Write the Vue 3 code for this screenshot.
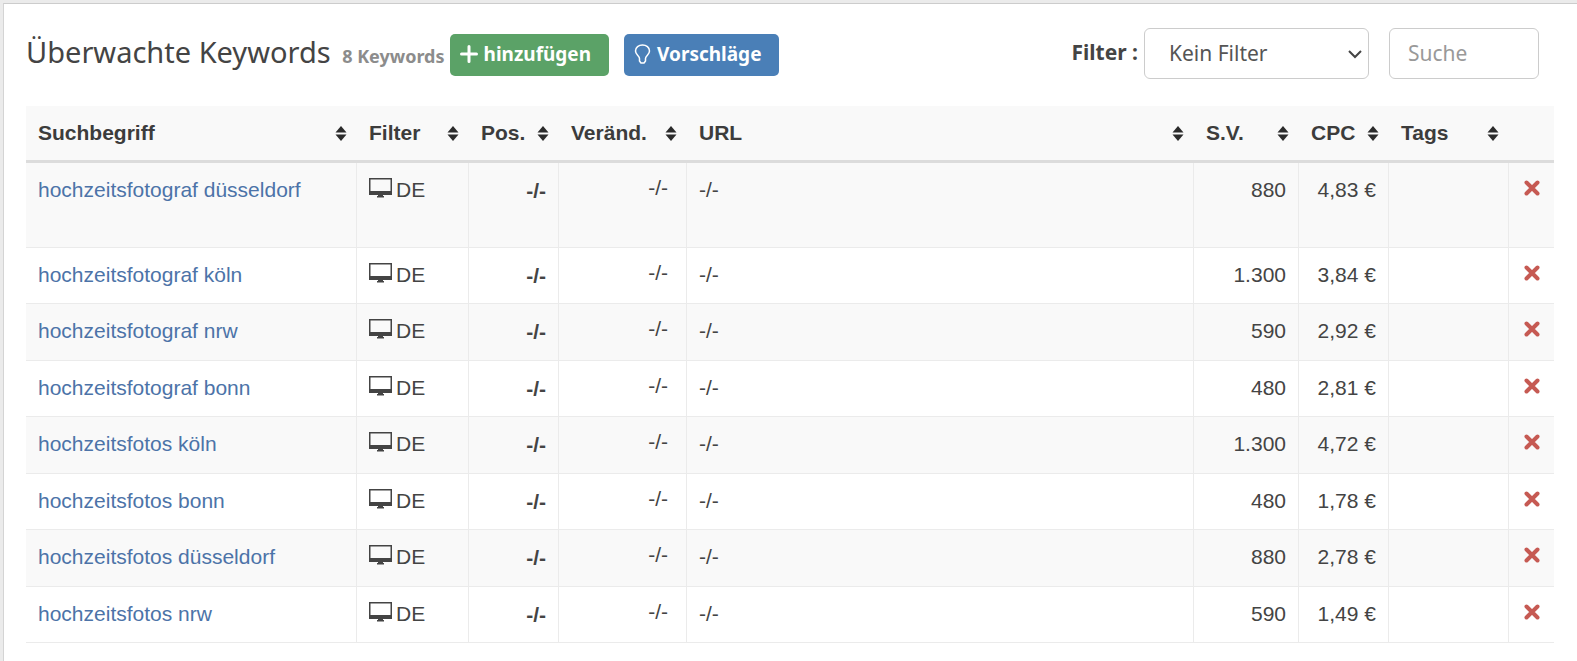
<script setup>
import { ref } from 'vue'

const filter = ref('none')
const search = ref('')

const columns = [
  { key: 'term', label: 'Suchbegriff', sortable: true },
  { key: 'filter', label: 'Filter', sortable: true },
  { key: 'pos', label: 'Pos.', sortable: true },
  { key: 'change', label: 'Veränd.', sortable: true },
  { key: 'url', label: 'URL', sortable: true },
  { key: 'volume', label: 'S.V.', sortable: true },
  { key: 'cpc', label: 'CPC', sortable: true },
  { key: 'tags', label: 'Tags', sortable: true },
  { key: 'remove', label: '', sortable: false }
]

const keywords = [
  { term: 'hochzeitsfotograf düsseldorf', volume: '880', cpc: '4,83 €' },
  { term: 'hochzeitsfotograf köln', volume: '1.300', cpc: '3,84 €' },
  { term: 'hochzeitsfotograf nrw', volume: '590', cpc: '2,92 €' },
  { term: 'hochzeitsfotograf bonn', volume: '480', cpc: '2,81 €' },
  { term: 'hochzeitsfotos köln', volume: '1.300', cpc: '4,72 €' },
  { term: 'hochzeitsfotos bonn', volume: '480', cpc: '1,78 €' },
  { term: 'hochzeitsfotos düsseldorf', volume: '880', cpc: '2,78 €' },
  { term: 'hochzeitsfotos nrw', volume: '590', cpc: '1,49 €' }
]
</script>

<template>
  <main class="panel">
    <header class="toolbar">
      <div class="heading">
        <h1 class="title">Überwachte Keywords <small>8 Keywords</small></h1>
        <div class="actions">
          <button type="button" class="btn btn-add">
            <svg width="18" height="18" viewBox="0 0 18 18" aria-hidden="true">
              <path d="M9 1.500v15M1.500 9h15" stroke="currentColor" stroke-width="3" stroke-linecap="round" />
            </svg>
            hinzufügen
          </button>
          <button type="button" class="btn btn-ideas">
            <svg width="17" height="20" viewBox="0 0 17 20" fill="none" stroke="currentColor" aria-hidden="true">
              <path d="M5.500 14.500C5.300 11.500 1.500 10.500 1.500 6.900C1.500 3.300 4.700 1 8.500 1S15.500 3.300 15.500 6.900C15.500 10.500 11.700 11.500 11.500 14.500V17L10 19H7L5.500 17z" stroke-width="1.500" stroke-linejoin="round" />
            </svg>
            Vorschläge
          </button>
        </div>
      </div>
      <form class="filters" @submit.prevent>
        <label for="filter">Filter :</label>
        <div class="select">
          <select id="filter" v-model="filter">
            <option value="none">Kein Filter</option>
          </select>
          <svg class="chevron" width="14" height="9" viewBox="0 0 14 9" fill="none" aria-hidden="true">
            <path d="M1 1l6 6 6-6" stroke="#444" stroke-width="2" />
          </svg>
        </div>
        <input v-model="search" class="search" type="text" placeholder="Suche" aria-label="Suche" />
      </form>
    </header>

    <table class="keywords">
      <colgroup>
        <col v-for="c in columns" :key="c.key" :class="'col-' + c.key" />
      </colgroup>
      <thead>
        <tr>
          <th v-for="c in columns" :key="c.key" scope="col">
            <button v-if="c.sortable" type="button" class="sort">
              {{ c.label }}
              <svg width="12" height="15" viewBox="0 0 12 15" fill="#2b2b2b" aria-hidden="true">
                <path d="M6 0L11.500 6.500H.5z" />
                <path d="M6 15L.5 8.500H11.500z" />
              </svg>
            </button>
          </th>
        </tr>
      </thead>
      <tbody>
        <tr v-for="k in keywords" :key="k.term">
          <td><a href="#">{{ k.term }}</a></td>
          <td>
            <span class="device">
              <svg width="23" height="20" viewBox="0 0 23 20" fill="#444" aria-hidden="true">
                <path fill-rule="evenodd" d="M0 0h23v17H0zM1.500 1.500v11.500h20v-11.500z" />
                <path d="M9 17h5v1h1v1.500H8V18h1z" />
              </svg>
              DE
            </span>
          </td>
          <td class="num pos">-/-</td>
          <td class="num change">-/-</td>
          <td>-/-</td>
          <td class="num">{{ k.volume }}</td>
          <td class="num">{{ k.cpc }}</td>
          <td></td>
          <td class="remove-cell">
            <button type="button" class="remove" aria-label="Entfernen">
              <svg width="16" height="16" viewBox="0 0 16 16" aria-hidden="true">
                <path d="M2.500 2.500l11 11M13.500 2.500l-11 11" stroke="#c65a53" stroke-width="4" stroke-linecap="round" />
              </svg>
            </button>
          </td>
        </tr>
      </tbody>
    </table>
  </main>
</template>

<style>
body {
  background: #ebebeb;
}
</style>

<style scoped>
.panel {
  box-sizing: border-box;
  min-height: calc(100vh - 3px);
  margin: 3px 0 0 3px;
  padding: 24px 23px 18px 22px;
  border-top: 1px solid #ccc;
  border-left: 1px solid #d4d4d4;
  background: #fff;
  color: #444;
  font-family: "Liberation Sans", Arial, sans-serif;
  font-size: 21px;
}

.toolbar,
.toolbar select,
.toolbar input,
.btn {
  font-family: "Noto Sans", "Open Sans", sans-serif;
}

.toolbar {
  display: flex;
  align-items: center;
  padding-right: 15px;
  margin-bottom: 27px;
}

.heading {
  display: flex;
  align-items: center;
  padding-top: 3px;
}

.title {
  margin: 0 5px 0 0;
  padding-bottom: 2px;
  font-size: 29px;
  font-weight: 400;
  line-height: 40px;
  white-space: nowrap;
}

.title small {
  margin-left: 4px;
  color: #8c8c8c;
  font-size: 18px;
  font-weight: 700;
}

.actions {
  display: flex;
  gap: 15px;
}

.btn {
  display: flex;
  align-items: center;
  gap: 6px;
  height: 42px;
  padding: 0 18px 2px 10px;
  border: 0;
  border-radius: 5px;
  color: #fff;
  font-size: 19px;
  font-weight: 700;
  white-space: nowrap;
}

.btn-add {
  background: #5ba267;
}

.btn-ideas {
  background: #4a7fb7;
}

.filters {
  display: flex;
  align-items: center;
  margin-left: auto;
}

.filters label {
  margin: 0 6px 4px 0;
  font-weight: 700;
}

.select {
  position: relative;
  display: flex;
  margin-right: 20px;
}

.select select,
.search {
  box-sizing: border-box;
  height: 51px;
  margin: 0;
  border: 1px solid #ccc;
  border-radius: 6px;
  background: #fff;
  color: #555;
  font-size: 21px;
}

.select select {
  width: 225px;
  padding: 0 24px 2px;
  appearance: none;
}

.chevron {
  position: absolute;
  top: 22px;
  right: 7px;
  pointer-events: none;
}

.search {
  width: 150px;
  padding: 0 18px 2px;
}

.search::placeholder {
  color: #999;
}

.keywords {
  width: 100%;
  border-collapse: separate;
  border-spacing: 0;
  table-layout: fixed;
}

.col-term { width: 331px; }
.col-filter { width: 112px; }
.col-pos { width: 90px; }
.col-change { width: 128px; }
.col-volume { width: 105px; }
.col-cpc { width: 90px; }
.col-tags { width: 120px; }
.col-remove { width: 45px; }

th {
  height: 54px;
  padding: 0 10px 0 12px;
  border-bottom: 3px solid #dcdcdc;
  background: #f9f9f9;
}

.sort {
  display: flex;
  align-items: center;
  justify-content: space-between;
  width: 100%;
  padding: 0;
  border: 0;
  background: none;
  color: #3c3c3c;
  font: inherit;
  font-weight: 700;
}

td {
  box-sizing: border-box;
  height: 56px;
  padding: 15px 12px 0;
  border-right: 1px solid #ebebeb;
  border-bottom: 1px solid #ebebeb;
  line-height: 24px;
  vertical-align: top;
  white-space: nowrap;
}

td:last-child {
  border-right: 0;
}

tbody tr:nth-child(odd) td {
  height: 57px;
  background: #f9f9f9;
}

tbody tr:first-child td {
  height: 85px;
}

a {
  color: #4c73a8;
  text-decoration: none;
}

.device {
  display: flex;
  gap: 4px;
}

.num {
  text-align: right;
}

.pos {
  padding-top: 16px;
  font-weight: 700;
}

.change {
  padding-top: 13px;
  padding-right: 18px;
}

.remove-cell {
  padding: 14px 0 0;
  text-align: center;
}

.remove {
  display: inline-flex;
  padding: 0;
  border: 0;
  background: none;
}
</style>
